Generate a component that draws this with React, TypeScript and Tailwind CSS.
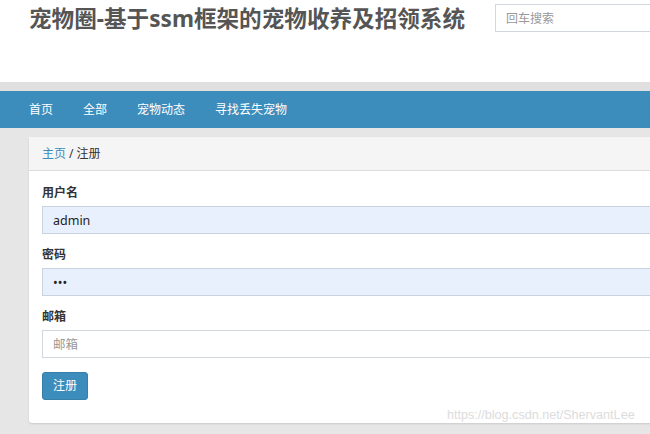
import React from 'react';

const fontStack = "font-['Noto_Sans','Noto_Sans_CJK_SC',sans-serif]";

const navItems = ['首页', '全部', '宠物动态', '寻找丢失宠物'];

function Field({
  label,
  value,
  placeholder,
  type = 'text',
  filled,
}: {
  readonly label: string;
  readonly value?: string;
  readonly placeholder?: string;
  readonly type?: string;
  readonly filled?: boolean;
}): JSX.Element {
  return (
    <div className="mb-[12px] flex flex-col">
      <label className="mb-[4px] h-[18px] text-[12px] leading-[18px] font-bold text-[#333]">
        {label}
      </label>
      <input
        type={type}
        readOnly
        value={value}
        placeholder={placeholder}
        className={`h-[28px] w-full border px-[10px] text-[12.5px] text-[#222] outline-none placeholder:text-[#999] ${
          filled
            ? 'border-[#c9d3e0] bg-[#e8f0fe]'
            : 'border-[#d2d6de] bg-white'
        }`}
      />
    </div>
  );
}

export default function App(): JSX.Element {
  return (
    <div
      className={`relative h-[434px] w-[650px] overflow-hidden bg-[#e6e6e6] ${fontStack}`}
    >
      <header className="flex h-[82px] items-start bg-white pl-[29px]">
        <h1 className="mt-[4px] w-[440px] shrink-0 text-[22.6px] leading-[30px] font-bold whitespace-nowrap text-[#555]">
          宠物圈-基于ssm框架的宠物收养及招领系统
        </h1>
        <input
          readOnly
          placeholder="回车搜索"
          className="mt-[4px] ml-[26px] h-[28px] w-[200px] shrink-0 border border-[#d2d6de] px-[10px] text-[12px] outline-none placeholder:text-[#999]"
        />
      </header>
      <div className="h-[9px] bg-[#e0e0e0]" />
      <nav className="flex h-[37px] items-center bg-[#3c8dbc] pl-[14px]">
        {navItems.map((item) => (
          <a
            key={item}
            href="#"
            className="px-[15px] text-[12px] leading-[37px] text-white"
          >
            {item}
          </a>
        ))}
      </nav>
      <div className="pt-[9px] pl-[29px]">
        <div className="w-[660px] rounded-[3px] bg-white shadow-[0_1px_2px_rgba(0,0,0,0.12)]">
          <div className="flex h-[34px] items-center border-b border-[#dcdcdc] bg-[#f5f5f5] px-[13px] text-[12px] text-[#333]">
            <a href="#" className="text-[#3c8dbc]">
              主页
            </a>
            <span className="mx-[3px]">/</span>
            <span>注册</span>
          </div>
          <form className="px-[13px] pt-[13px] pb-[23px]">
            <Field label="用户名" value="admin" filled />
            <Field label="密码" value="abc" type="password" filled />
            <Field label="邮箱" placeholder="邮箱" />
            <button
              type="button"
              className="mt-[2px] h-[28px] w-[46px] rounded-[3px] border border-[#367fa9] bg-[#3c8dbc] text-[12px] text-white"
            >
              注册
            </button>
          </form>
        </div>
      </div>
      <span className="pointer-events-none absolute top-[406px] left-[447px] font-['Liberation_Sans',sans-serif] text-[12.6px] leading-[18px] whitespace-nowrap text-[#dcdcdc]">
        https://blog.csdn.net/ShervantLee
      </span>
    </div>
  );
}
